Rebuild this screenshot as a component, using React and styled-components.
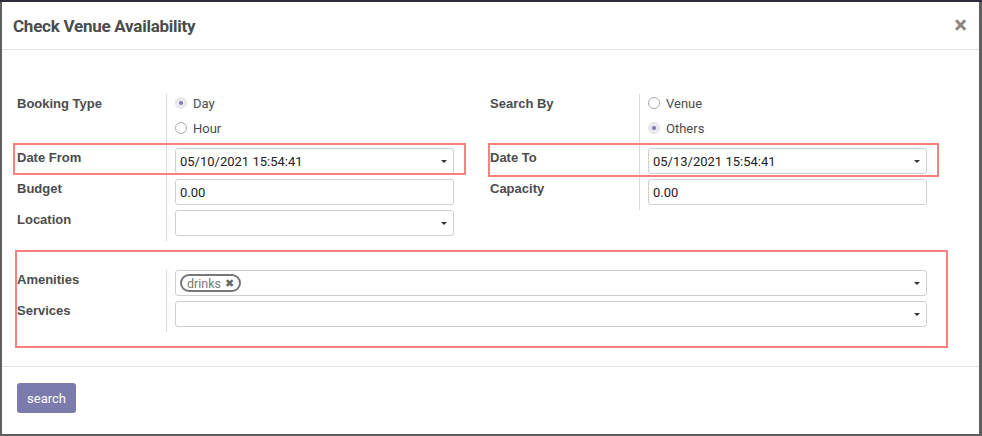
import styled, { createGlobalStyle } from "styled-components";

const GlobalStyle = createGlobalStyle`
    html, body {
        margin: 0;
        padding: 0;
        background-color: #5f5f5f;
        font-family: Roboto, "Liberation Sans", sans-serif;
        font-size: 13px;
        color: #4c4c4c;
    }
    * { box-sizing: border-box; }
`

const Radio = ({ checked, label }) => (
    <RadioItem>
        <RadioCircle checked={checked} />
        <span>{label}</span>
    </RadioItem>
)

const Field = ({ value, select, children }) => (
    <Input>
        <InputText>{children || value}</InputText>
        {select && <Caret />}
    </Input>
)

const App = () => {
    return (
        <>
            <GlobalStyle />
            <NavStrip />
            <Backdrop>
                <Modal>
                    <Header>
                        <Title>Check Venue Availability</Title>
                        <Close>×</Close>
                    </Header>

                    <Body>
                        <Columns>
                            <Group>
                                <Row>
                                    <Label>Booking Type</Label>
                                    <Value first>
                                        <Radio checked label="Day" />
                                        <Radio label="Hour" />
                                    </Value>
                                </Row>
                                <Row>
                                    <Highlight style={{ top: -5, left: 0, right: 0, bottom: 4 }} />
                                    <Label>Date From</Label>
                                    <Value>
                                        <Field select value="05/10/2021 15:54:41" />
                                    </Value>
                                </Row>
                                <Row>
                                    <Label>Budget</Label>
                                    <Value>
                                        <Field value="0.00" />
                                    </Value>
                                </Row>
                                <Row>
                                    <Label>Location</Label>
                                    <Value>
                                        <Field select value="" />
                                    </Value>
                                </Row>
                            </Group>

                            <Group>
                                <Row>
                                    <Label>Search By</Label>
                                    <Value first>
                                        <Radio label="Venue" />
                                        <Radio checked label="Others" />
                                    </Value>
                                </Row>
                                <Row>
                                    <Highlight style={{ top: -5, left: 2, right: 0, bottom: 2 }} />
                                    <Label>Date To</Label>
                                    <Value>
                                        <Field select value="05/13/2021 15:54:41" />
                                    </Value>
                                </Row>
                                <Row>
                                    <Label>Capacity</Label>
                                    <Value>
                                        <Field value="0.00" />
                                    </Value>
                                </Row>
                            </Group>
                        </Columns>

                        <WideSection>
                            <Highlight style={{ top: -20, left: 2, right: -9, bottom: -16 }} />
                            <Group wide>
                                <Row>
                                    <Label>Amenities</Label>
                                    <Value>
                                        <Field select>
                                            <Tag>drinks <TagX>✖</TagX></Tag>
                                        </Field>
                                    </Value>
                                </Row>
                                <Row>
                                    <Label>Services</Label>
                                    <Value>
                                        <Field select value="" />
                                    </Value>
                                </Row>
                            </Group>
                        </WideSection>
                    </Body>

                    <Footer>
                        <Button>search</Button>
                    </Footer>
                </Modal>
            </Backdrop>
        </>
    )
}

const NavStrip = styled.div`
    height: 2px;
    background-color: #2f2d3d;
`

const Backdrop = styled.div`
    padding: 0 3px 2px 2px;
`

const Modal = styled.div`
    background-color: white;
    height: 432px;
    display: flex;
    flex-direction: column;
`

const Header = styled.div`
    height: 48px;
    padding: 0 12px 0 11px;
    border-bottom: 1px solid #e2e2e2;
    display: flex;
    align-items: center;
    justify-content: space-between;
`

const Title = styled.h4`
    margin: 0;
    font-size: 17px;
    letter-spacing: -0.25px;
    font-weight: 700;
    color: #4c4c4c;
`

const Close = styled.span`
    font-size: 24px;
    font-weight: 700;
    color: #8f8680;
    line-height: 1;
    margin-top: -2px;
`

const Body = styled.div`
    flex: 1;
    padding: 44px 0 0 11px;
    border-bottom: 1px solid #e2e2e2;
`

const Columns = styled.div`
    display: flex;
    gap: 20px;
`

const Group = styled.div`
    flex: 0 0 auto;
    width: ${(p) => (p.wide ? "100%" : "453px")};
    display: flex;
    flex-direction: column;
`

const Row = styled.div`
    position: relative;
    display: flex;
    padding-bottom: 5px;
`

const Label = styled.div`
    width: 154px;
    flex-shrink: 0;
    padding-left: 4px;
    padding-top: 1px;
    line-height: 18px;
    font-family: "Liberation Sans", Arial, sans-serif;
    font-weight: 700;
    color: #4c4c4c;
    border-right: 1px solid #dcdcdc;
    margin-bottom: -5px;
    padding-bottom: 5px;
`

const Value = styled.div`
    flex: 1;
    padding: 0 12px 0 8px;
    padding-bottom: ${(p) => (p.first ? "6px" : "0")};
`

const RadioItem = styled.label`
    display: flex;
    align-items: center;
    gap: 6px;
    height: 18px;
    margin-bottom: 7px;
    color: #4c4c4c;

    &:last-child {
        margin-bottom: 0;
    }
`

const RadioCircle = styled.span`
    width: 12px;
    height: 12px;
    border-radius: 50%;
    border: 1px solid ${(p) => (p.checked ? "#e4e4ec" : "#a8aab4")};
    background-color: ${(p) => (p.checked ? "#e9e9ef" : "white")};
    display: flex;
    align-items: center;
    justify-content: center;

    &::after {
        content: "";
        width: 4px;
        height: 4px;
        border-radius: 50%;
        background-color: ${(p) => (p.checked ? "#7c7bad" : "transparent")};
    }
`

const Input = styled.div`
    height: 26px;
    border: 1px solid #cfcfcf;
    border-radius: 3px;
    padding: 0 6px 0 4px;
    display: flex;
    align-items: center;
    justify-content: space-between;
    color: #222;
    font-size: 13px;
`

const InputText = styled.div`
    display: flex;
    align-items: center;
`

const Caret = styled.span`
    width: 0;
    height: 0;
    border-left: 3px solid transparent;
    border-right: 3px solid transparent;
    border-top: 3px solid #333;
`

const Tag = styled.span`
    display: inline-flex;
    align-items: center;
    gap: 4px;
    height: 18px;
    padding: 0 5px 0 5px;
    border: 2px solid #777;
    border-radius: 9px;
    color: #7a7a7a;
    font-size: 12.5px;
`

const TagX = styled.span`
    font-family: "DejaVu Sans", sans-serif;
    font-size: 11px;
    color: #666;
`

const Highlight = styled.div`
    position: absolute;
    border: 2px solid #fe7f7f;
    pointer-events: none;
`

const WideSection = styled.div`
    position: relative;
    margin-top: 29px;
    width: 926px;
`

const Footer = styled.div`
    height: 67px;
    padding: 16px 15px;
`

const Button = styled.button`
    height: 30px;
    width: 59px;
    border: none;
    border-radius: 3px;
    background-color: #7c7bad;
    color: white;
    font-family: Roboto, "Liberation Sans", sans-serif;
    font-size: 13px;
    padding: 0;
`

export default App;
